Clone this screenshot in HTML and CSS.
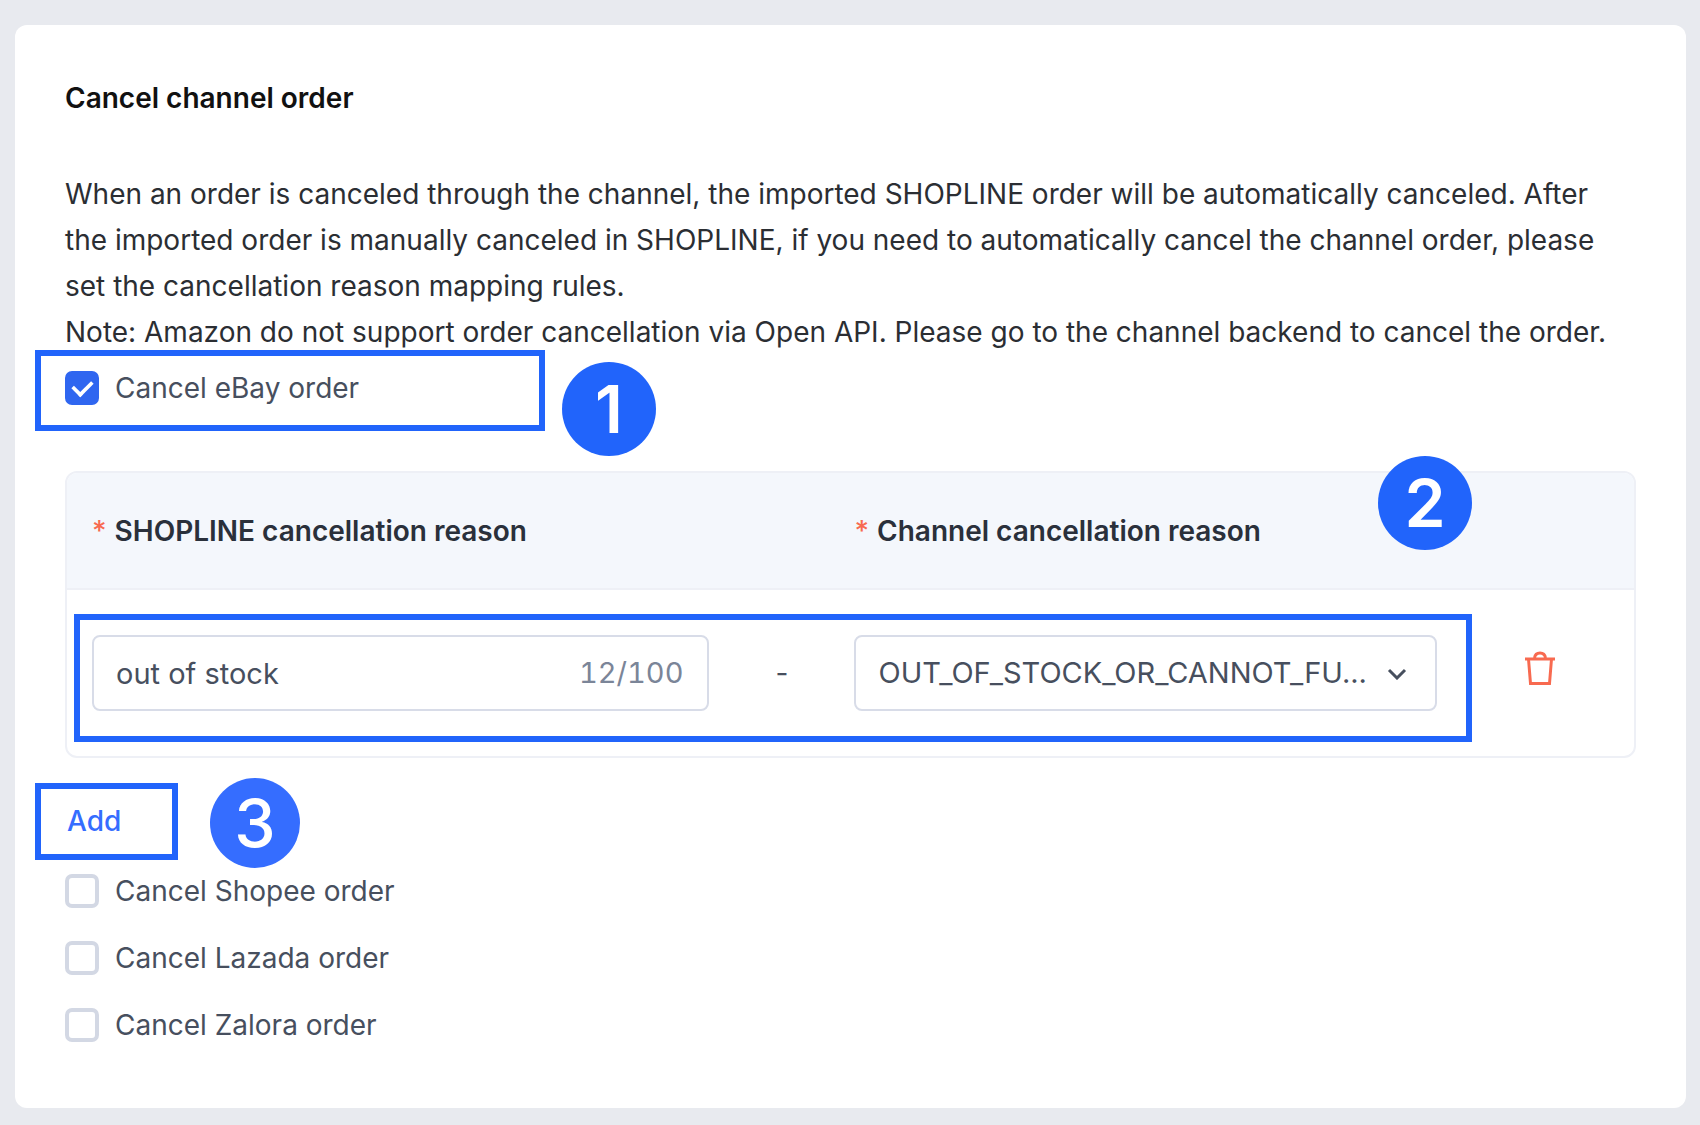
FILE: index.html
```html
<!DOCTYPE html>
<html lang="en">
<head>
    <meta charset="UTF-8">
    <meta name="viewport" content="width=device-width, initial-scale=1.0">
    <title>Cancel channel order</title>
    <link rel="stylesheet" href="styles.css">
</head>
<body>
    <main class="card">
        <h1>Cancel channel order</h1>

        <p class="description">
            When an order is canceled through the channel, the imported SHOPLINE order will be automatically canceled. After the imported order is manually canceled in SHOPLINE, if you need to automatically cancel the channel order, please set the cancellation reason mapping rules.<br>
            Note: Amazon do not support order cancellation via Open API. Please go to the channel backend to cancel the order.
        </p>

        <div class="step step-channel">
            <label class="check">
                <input type="checkbox" checked>
                Cancel eBay order
            </label>
            <span class="mark mark-channel"></span>
            <span class="badge badge-channel">1</span>
        </div>

        <div class="step step-mapping">
            <table class="mapping">
                <colgroup>
                    <col class="col-reason">
                    <col class="col-dash">
                    <col class="col-channel">
                    <col class="col-action">
                </colgroup>
                <thead>
                    <tr>
                        <th colspan="2"><span class="required">*</span><span id="shop-reason">SHOPLINE cancellation reason</span></th>
                        <th colspan="2"><span class="required">*</span><span id="channel-reason">Channel cancellation reason</span></th>
                    </tr>
                </thead>
                <tbody>
                    <tr>
                        <td>
                            <div class="field">
                                <input type="text" value="out of stock" maxlength="100" aria-labelledby="shop-reason">
                                <span class="counter">12/100</span>
                            </div>
                        </td>
                        <td class="dash">-</td>
                        <td>
                            <div class="field">
                                <select aria-labelledby="channel-reason">
                                    <option>OUT_OF_STOCK_OR_CANNOT_FU...</option>
                                </select>
                                <svg class="chevron" width="20" height="14" viewBox="0 0 20 14" fill="none" stroke="#474f5e" stroke-width="3">
                                    <path d="M2 4 L10 12 L18 4"/>
                                </svg>
                            </div>
                        </td>
                        <td class="action">
                            <button type="button" class="delete" aria-label="Delete">
                                <svg width="32" height="36" viewBox="0 0 32 36" fill="none" stroke="#f86a50" stroke-width="3">
                                    <path d="M1 10 H31"/>
                                    <path d="M10.500 9 C11 5.500 13 4 16 4 C19 4 21 5.500 21.500 9"/>
                                    <path d="M4.500 10 L6.500 34.500 H25.500 L27.500 10"/>
                                </svg>
                            </button>
                        </td>
                    </tr>
                </tbody>
            </table>
            <span class="mark mark-mapping"></span>
            <span class="badge badge-mapping">2</span>
        </div>

        <div class="step step-add">
            <button type="button" class="add">Add</button>
            <span class="mark mark-add"></span>
            <span class="badge badge-add">3</span>
        </div>

        <div class="channels">
            <label class="check"><input type="checkbox"> Cancel Shopee order</label>
            <label class="check"><input type="checkbox"> Cancel Lazada order</label>
            <label class="check"><input type="checkbox"> Cancel Zalora order</label>
        </div>
    </main>
</body>
</html>
```

FILE: styles.css
```css
* {
    margin: 0;
    padding: 0;
    box-sizing: border-box;
}

body {
    font-family: Inter, "Liberation Sans", sans-serif;
    font-size: 28px;
    line-height: 46px;
    color: #2b2e33;
    background-color: #e8eaef;
    padding: 25px 14px 17px 15px;
}

input, select, button {
    font: inherit;
    color: inherit;
    border: none;
    background: none;
}

.card {
    background-color: #fff;
    border-radius: 12px;
    padding: 50px 50px 60px;
}

h1 {
    font-size: 28px;
    font-weight: 600;
    color: #111;
    margin-bottom: 50px;
}

/* Checkboxes */
.check {
    display: flex;
    align-items: center;
    gap: 16px;
    color: #474f5e;
    cursor: pointer;
}

.check input {
    appearance: none;
    display: grid;
    place-items: center;
    width: 34px;
    height: 34px;
    border: 4px solid #d3d8e4;
    border-radius: 7px;
    background-color: #fff;
}

.check input:checked {
    border-color: #2f66f0;
    background-color: #2f66f0;
}

/* Tick */
.check input:checked::before {
    content: "";
    width: 17px;
    height: 10px;
    border-left: 4px solid #fff;
    border-bottom: 4px solid #fff;
    transform: translateY(-2px) rotate(-45deg) scale(0.9);
}

.channels {
    display: flex;
    flex-direction: column;
    align-items: flex-start;
    gap: 21px;
    margin-top: 24px;
}

/* Mapping table */
.mapping {
    width: 100%;
    table-layout: fixed;
    border-collapse: separate;
    border-spacing: 0;
    border: 2px solid #eef0f6;
    border-radius: 12px;
    overflow: hidden;
}

.col-reason {
    width: 41%;
}

.col-dash {
    width: 145px;
}

.col-action {
    width: 197px;
}

.mapping th {
    height: 117px;
    text-align: left;
    font-weight: 600;
    color: #2a303b;
    background-color: #f4f7fc;
    border-bottom: 2px solid #eef0f6;
}

.mapping th:first-child, .mapping td:first-child {
    padding-left: 25px;
}

.mapping td {
    height: 166px;
    color: #474f5e;
}

.required {
    color: #f86a50;
    font-weight: 500;
    margin-right: 8px;
}

.mapping .dash {
    text-align: center;
}

.mapping .action {
    text-align: center;
    padding-left: 10px;
}

.field {
    position: relative;
    display: flex;
    align-items: center;
    height: 76px;
    padding: 0 24px 0 22px;
    border: 2px solid #d8dce8;
    border-radius: 8px;
    font-size: 29px;
}

.field input, .field select {
    flex: 1;
    min-width: 0;
    height: 100%;
    outline: none;
}

.field select {
    appearance: none;
}

.counter {
    color: #7b8598;
    font-variant-numeric: tabular-nums;
}

.chevron {
    position: absolute;
    right: 28px;
    pointer-events: none;
}

.delete {
    display: inline-flex;
    cursor: pointer;
}

.add {
    display: block;
    font-weight: 500;
    color: #356dff;
    padding: 0 2px;
    cursor: pointer;
}

/* Step marks drawn over the form */
.step {
    position: relative;
}

.step-channel {
    margin-top: 10px;
}

.step-mapping {
    margin-top: 60px;
}

.step-add {
    margin-top: 40px;
}

.mark {
    position: absolute;
    border: 6px solid #2164fb;
    pointer-events: none;
}

.mark-channel {
    top: -15px;
    left: -30px;
    width: 510px;
    height: 81px;
}

.mark-mapping {
    left: 9px;
    right: 164px;
    bottom: 16px;
    height: 128px;
}

.mark-add {
    top: -15px;
    left: -30px;
    width: 143px;
    height: 77px;
}

.badge {
    position: absolute;
    display: flex;
    align-items: center;
    justify-content: center;
    width: 94px;
    height: 94px;
    border-radius: 50%;
    background-color: #2164fb;
    color: #fff;
    font-size: 66px;
    font-weight: 600;
}

.badge-channel {
    top: -3px;
    left: 497px;
}

.badge-mapping {
    top: -15px;
    right: 164px;
}

.badge-add {
    top: -20px;
    left: 145px;
    width: 90px;
    height: 90px;
    background-color: #356dff;
    font-weight: 500;
}
```
